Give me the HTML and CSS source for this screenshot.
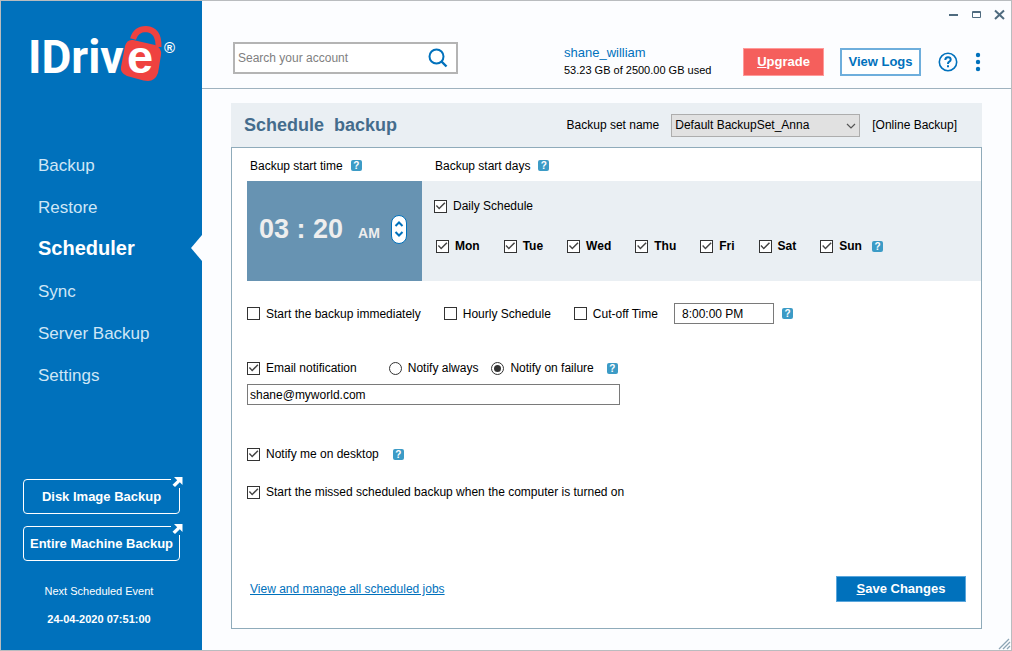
FILE: index.html
```html
<!DOCTYPE html>
<html lang="en">
<head>
<meta charset="utf-8">
<title>IDrive - Scheduler</title>
<link rel="stylesheet" href="styles.css">
</head>
<body>
<div class="window">
  <aside class="sidebar">
    <svg class="logo" viewBox="0 0 148 58" width="148" height="58" role="img" aria-label="IDrive">
      <text class="logo-text" x="-2" y="48">IDriv</text>
      <path fill="#ef4240" d="M103 15 L125 20 Q132 23 131 30 L128 48 Q125 56 118 56 Q114 56 108 54 L97 51 Q90 48 91 42 L95 21 Q97 14 103 15Z"/>
      <path fill="none" stroke="#ef4240" stroke-width="6" d="M103 14 Q106 4 116 4 Q129 5 128.500 22"/>
      <text class="logo-e" x="97" y="48">e</text>
      <text class="logo-mark" x="134" y="28">®</text>
    </svg>
    <nav class="nav">
      <a href="#backup">Backup</a>
      <a href="#restore">Restore</a>
      <a href="#scheduler" class="active" aria-current="page">Scheduler</a>
      <a href="#sync">Sync</a>
      <a href="#server">Server Backup</a>
      <a href="#settings">Settings</a>
    </nav>
    <div class="side-bottom">
      <button class="side-btn" type="button">Disk Image Backup
        <svg class="arrow" width="12" height="12" viewBox="0 0 12 12"><path fill="#fff" d="M3 1h8.500v8L8.800 6.300 4 11 1.500 8.800 6.200 4.200Z"/></svg>
      </button>
      <button class="side-btn" type="button">Entire Machine Backup
        <svg class="arrow" width="12" height="12" viewBox="0 0 12 12"><path fill="#fff" d="M3 1h8.500v8L8.800 6.300 4 11 1.500 8.800 6.200 4.200Z"/></svg>
      </button>
      <p class="next">Next Scheduled Event</p>
      <p class="next-date">24-04-2020 07:51:00</p>
    </div>
  </aside>

  <main class="main">
    <div class="titlebar">
      <button type="button" aria-label="Minimize"><svg width="11" height="11" viewBox="0 0 11 11"><path stroke="#4f6b7f" stroke-width="2" d="M1 6h9"/></svg></button>
      <button type="button" aria-label="Maximize"><svg width="11" height="11" viewBox="0 0 11 11"><path fill="none" stroke="#4f6b7f" d="M1.500 2.500h8v6h-8zM1 3.500h9"/></svg></button>
      <button type="button" aria-label="Close"><svg width="11" height="11" viewBox="0 0 11 11"><path stroke="#4f6b7f" stroke-width="2" d="M1 1.500l9 8.500M10 1.500l-9 8.500"/></svg></button>
    </div>
    <header class="header">
      <form class="search">
        <input type="text" placeholder="Search your account" aria-label="Search your account">
        <button type="button" aria-label="Search"><svg width="20" height="20" viewBox="0 0 20 20"><circle cx="8.500" cy="8.500" r="7" fill="none" stroke="#0071bc" stroke-width="2"/><path stroke="#0071bc" stroke-width="2.400" d="M13.500 13.500l5 5"/></svg></button>
      </form>
      <div class="account">
        <a href="#account">shane_william</a>
        <span>53.23 GB of 2500.00 GB used</span>
      </div>
      <div class="actions">
        <button class="btn upgrade" type="button"><u>U</u>pgrade</button>
        <button class="btn logs" type="button">View Logs</button>
        <button class="icon-btn" type="button" aria-label="Help"><svg width="20" height="20" viewBox="0 0 20 20"><circle cx="10" cy="10" r="8.700" fill="none" stroke="#0071bc" stroke-width="1.600"/><path fill="none" stroke="#0071bc" stroke-width="2" d="M7.300 8q0-2.800 2.700-2.800t2.700 2.400q0 1.300-1.400 2.100T10 12"/><path fill="#0071bc" d="M9 13.200h2v2H9z"/></svg></button>
        <button class="icon-btn more" type="button" aria-label="More"><svg width="6" height="20" viewBox="0 0 6 20"><g fill="#0071bc"><circle cx="3" cy="3" r="2.200"/><circle cx="3" cy="10" r="2.200"/><circle cx="3" cy="17" r="2.200"/></g></svg></button>
      </div>
    </header>

    <section class="panel">
      <div class="panel-head">
        <h1>Schedule&nbsp; backup</h1>
        <div class="set">
          <label for="set">Backup set name</label>
          <span class="select-wrap">
            <select id="set"><option>Default BackupSet_Anna</option></select>
            <svg width="10" height="6" viewBox="0 0 10 6"><path fill="none" stroke="#555" stroke-width="1.200" d="M1 1l4 4 4-4"/></svg>
          </span>
          <span>[Online Backup]</span>
        </div>
      </div>
      <form class="panel-body">
        <div class="schedule">
          <div class="caption">Backup start time <button class="tip" type="button">?</button></div>
          <div class="caption days-caption">Backup start days <button class="tip" type="button">?</button></div>
          <div class="clock">
            <span class="time">03 : 20</span>
            <span class="ampm">AM</span>
            <button class="spin" type="button" aria-label="Change time"><svg width="10" height="20" viewBox="0 0 10 20"><path fill="none" stroke="#0071bc" stroke-width="2" d="M1.500 7L5 3.500l3.500 3.500M1.500 13L5 16.500l3.500-3.500"/></svg></button>
          </div>
          <div class="days">
            <label class="check"><input type="checkbox" checked>Daily Schedule</label>
            <div class="day-list">
              <label class="check"><input type="checkbox" checked>Mon</label>
              <label class="check"><input type="checkbox" checked>Tue</label>
              <label class="check"><input type="checkbox" checked>Wed</label>
              <label class="check"><input type="checkbox" checked>Thu</label>
              <label class="check"><input type="checkbox" checked>Fri</label>
              <label class="check"><input type="checkbox" checked>Sat</label>
              <label class="check"><input type="checkbox" checked>Sun</label>
              <button class="tip" type="button">?</button>
            </div>
          </div>
        </div>

        <div class="row options">
          <label class="check"><input type="checkbox">Start the backup immediately</label>
          <label class="check"><input type="checkbox">Hourly Schedule</label>
          <label class="check"><input type="checkbox">Cut-off Time</label>
          <div class="cutoff-group">
            <input class="field cutoff" type="text" value="8:00:00 PM" aria-label="Cut-off time">
            <button class="tip" type="button">?</button>
          </div>
        </div>

        <div class="row notify">
          <label class="check"><input type="checkbox" checked>Email notification</label>
          <label class="check always"><input type="radio" name="when">Notify always</label>
          <label class="check"><input type="radio" name="when" checked>Notify on failure</label>
          <button class="tip" type="button">?</button>
        </div>
        <input class="field email" type="email" value="shane@myworld.com" aria-label="Email address">

        <div class="row desktop">
          <label class="check"><input type="checkbox" checked>Notify me on desktop</label>
          <button class="tip" type="button">?</button>
        </div>
        <div class="row missed">
          <label class="check"><input type="checkbox" checked>Start the missed scheduled backup when the computer is turned on</label>
        </div>

        <div class="panel-foot">
          <a href="#jobs">View and manage all scheduled jobs</a>
          <button class="btn save" type="submit"><u>S</u>ave Changes</button>
        </div>
      </form>
    </section>
    <svg class="grip" width="13" height="13" viewBox="0 0 13 13"><path stroke="#8da5b5" stroke-width="1.300" d="M1 12L11 2M5 12L12 5M9 12l3-3"/></svg>
  </main>
</div>
</body>
</html>
```
FILE: styles.css
```css
* { box-sizing: border-box; }

body {
  margin: 0;
  font: 12px/16px "Liberation Sans", Arial, sans-serif;
  color: #000;
}

button, input, select { font: inherit; color: inherit; margin: 0; }
button { padding: 0; border: 0; background: none; cursor: pointer; }
svg { display: block; }

.window {
  display: flex;
  min-height: 100vh;
  border: 1px solid #b9bcbf;
  background: #fcfdff;
}

/* Sidebar */
.sidebar {
  display: flex;
  flex-direction: column;
  flex: 0 0 201px;
  background: #0071bc;
  color: #fff;
}
.logo { margin: 24px 0 0 29px; overflow: visible; fill: #fff; }
.logo-text { font: bold 46px Roboto, sans-serif; }
.logo-e { font: bold 47px "Liberation Sans", Arial, sans-serif; }
.logo-mark { font: bold 15px "Liberation Sans", Arial, sans-serif; }

.nav { display: flex; flex-direction: column; margin-top: 62px; }
.nav a {
  position: relative;
  padding-left: 37px;
  font-size: 17px;
  line-height: 42px;
  color: #cfe6f6;
  text-decoration: none;
}
.nav .active {
  padding-bottom: 4px;
  font-size: 20px;
  font-weight: bold;
  line-height: 38px;
  color: #fff;
}
.nav .active::after {
  content: "";
  position: absolute;
  top: 6px;
  right: 0;
  width: 11px;
  height: 26px;
  background: #fcfdff;
  clip-path: polygon(100% 0, 0 50%, 100% 100%);
}

.side-bottom {
  display: flex;
  flex-direction: column;
  gap: 12px;
  margin-top: auto;
  padding: 0 22px 23px;
  text-align: center;
}
.side-btn {
  position: relative;
  height: 35px;
  border: 1px solid #fff;
  border-radius: 4px;
  font-size: 13px;
  font-weight: bold;
  white-space: nowrap;
}
.arrow { position: absolute; top: -4px; right: -4px; background: #0071bc; }
.next, .next-date { margin: 0; font-size: 11px; padding-right: 5px; }
.next { margin-top: 10px; }
.next-date { font-weight: bold; }

/* Top area */
.main { position: relative; flex: 1; min-width: 0; display: flex; flex-direction: column; }
.titlebar {
  display: flex;
  justify-content: flex-end;
  align-items: center;
  gap: 12px;
  height: 28px;
  padding: 0 6px 2px 0;
}
.header {
  display: flex;
  align-items: flex-end;
  height: 60px;
  padding: 0 30px 9px 31px;
  border-bottom: 1px solid #9fb2bf;
}
.search {
  display: flex;
  align-items: center;
  width: 225px;
  height: 32px;
  margin-bottom: 5px;
  padding: 0 8px 0 3px;
  border: 2px solid #b4b4b4;
  background: #fff;
}
.search input { flex: 1; min-width: 0; padding: 0; border: 0; outline: 0; background: none; }
.search input::placeholder { color: #808080; }
.account { display: flex; flex-direction: column; margin-left: 106px; font-size: 11px; }
.account a { font-size: 13px; color: #0071bc; text-decoration: none; }
.account span { line-height: 18px; }
.actions { display: flex; align-items: center; margin: 0 0 3px auto; }

.btn { height: 28px; font-size: 13px; font-weight: bold; white-space: nowrap; }
.upgrade { width: 81px; border: 1px solid #f99; background: #f55f5c; color: #fff; }
.logs { width: 81px; margin-left: 16px; border: 2px solid #6eaedc; background: #fff; color: #0071bc; }
.icon-btn { margin-left: 17px; }

/* Panel */
.panel { display: flex; flex-direction: column; flex: 1; margin: 14px 29px 21px; }
.panel-head {
  display: flex;
  justify-content: space-between;
  align-items: center;
  height: 44px;
  padding: 0 25px 0 13px;
  background: #eaeff3;
}
.panel-head h1 { margin: 0; font-size: 18px; color: #446c8c; }
.set { display: flex; align-items: center; gap: 12px; }
.select-wrap { position: relative; }
.select-wrap select {
  appearance: none;
  display: block;
  width: 189px;
  height: 23px;
  padding: 0 20px 0 3px;
  border: 1px solid #adadad;
  border-radius: 0;
  background: #e1e1e1;
}
.select-wrap svg { position: absolute; right: 4px; top: 9px; pointer-events: none; }

.panel-body {
  display: flex;
  flex-direction: column;
  flex: 1;
  padding: 2px 0 26px 15px;
  border: 1px solid #8fabba;
  background: #fff;
}
.schedule { display: grid; grid-template-columns: 175px 1fr; }
.caption { display: flex; align-items: center; gap: 8px; height: 31px; padding-left: 3px; }
.days-caption { padding-left: 13px; }
.tip {
  width: 11px;
  height: 11px;
  border-radius: 2px;
  background: #3c9bc6;
  color: #fff;
  font-size: 10px;
  font-weight: bold;
  line-height: 11px;
}

.clock {
  display: flex;
  align-items: center;
  height: 100px;
  padding: 0 0 4px 12px;
  background: #6793b2;
  color: #eee;
  font-weight: bold;
}
.time { font-size: 27px; }
.ampm { margin: 7px 11px 0 15px; font-size: 14px; }
.spin {
  display: grid;
  place-items: center;
  width: 16px;
  height: 29px;
  border: 1px solid #0071bc;
  border-radius: 8px;
  background: #fff;
}
.days { display: flex; flex-direction: column; align-items: flex-start; gap: 24px; padding: 17px 12px; background: #eaeff3; }
.day-list { display: flex; align-items: center; gap: 24px; padding-left: 2px; font-weight: bold; }
.day-list .tip { margin-left: -14px; }

.check { display: flex; align-items: center; gap: 6px; white-space: nowrap; }
.check input {
  appearance: none;
  display: grid;
  place-items: center;
  flex: none;
  width: 13px;
  height: 13px;
  border: 1px solid #333;
  background: #fff;
}
.check input[type="radio"] { border-radius: 50%; }
.check input[type="checkbox"]:checked::after {
  content: "";
  width: 11px;
  height: 11px;
  background: #444;
  clip-path: polygon(8% 50%, 17% 42%, 38% 64%, 85% 15%, 95% 24%, 38% 82%);
}
.check input[type="radio"]:checked::after {
  content: "";
  width: 7px;
  height: 7px;
  border-radius: 50%;
  background: #333;
}

.row { display: flex; align-items: center; }
.options { gap: 23px; margin-top: 22px; }
.field { height: 21px; border: 1px solid #7a7a7a; background: #fff; outline: 0; }
.cutoff-group { display: flex; align-items: center; gap: 8px; margin-left: -7px; }
.cutoff { width: 100px; padding: 0 7px; }
.notify { gap: 13px; margin-top: 36px; }
.notify .always { margin-left: 19px; }
.email { width: 373px; margin-top: 8px; padding: 0 2px; }
.desktop { gap: 14px; margin-top: 41px; }
.missed { margin-top: 22px; }

.panel-foot { display: flex; justify-content: space-between; align-items: center; margin-top: auto; padding: 0 15px 0 3px; }
.panel-foot a { color: #0071bc; }
.save { width: 130px; height: 26px; border: 1px solid #5aa6dc; background: #0071bc; color: #fff; }

.grip { position: absolute; right: 0; bottom: 0; }
```
